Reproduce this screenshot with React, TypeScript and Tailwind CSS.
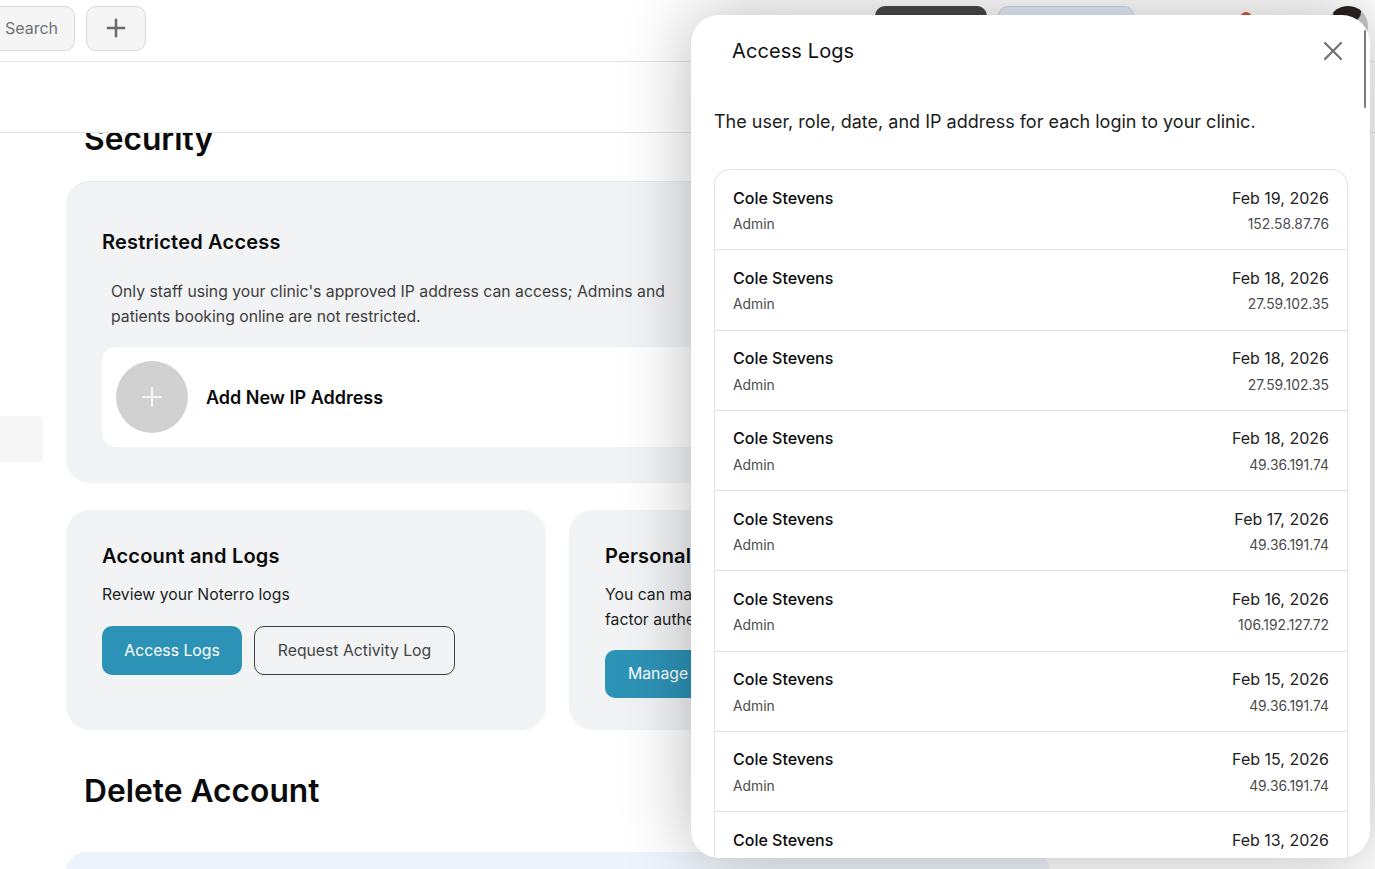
import { Plus, X } from 'lucide-react';

const logs = [
  { date: 'Feb 19, 2026', ip: '152.58.87.76' },
  { date: 'Feb 18, 2026', ip: '27.59.102.35' },
  { date: 'Feb 18, 2026', ip: '27.59.102.35' },
  { date: 'Feb 18, 2026', ip: '49.36.191.74' },
  { date: 'Feb 17, 2026', ip: '49.36.191.74' },
  { date: 'Feb 16, 2026', ip: '106.192.127.72' },
  { date: 'Feb 15, 2026', ip: '49.36.191.74' },
  { date: 'Feb 15, 2026', ip: '49.36.191.74' },
  { date: 'Feb 13, 2026', ip: '49.36.191.74' },
];

function TopBar() {
  return (
    <header className="flex h-[62px] shrink-0 items-start border-b border-[#e5e5e5] pt-[6px]">
      <button className="ml-[-20px] flex h-[45px] w-[95px] items-center justify-end rounded-[10px] border border-[#d8d8d8] bg-[#f5f5f6] pb-[2px] pr-4 text-base text-[#6f7278]">
        Search
      </button>
      <button className="ml-[11px] flex h-[45px] w-[60px] items-center justify-center rounded-[10px] border border-[#d8d8d8] bg-[#f5f5f6] pb-[1px] text-[#6b6b6b]">
        <Plus className="h-7 w-7" strokeWidth={2.2} />
      </button>
      <div className="ml-[729px] h-[45px] w-[112px] rounded-[10px] bg-[#474747]" />
      <div className="ml-[11px] h-[45px] w-[136px] rounded-[10px] border border-[#c5d6ef] bg-[#e6eefa]" />
      <div className="ml-[106px] mt-[6px] h-3 w-3 rounded-full bg-[#d9543c]" />
      <div className="ml-[76px] h-[40px] w-[40px] overflow-hidden rounded-full bg-[#c9c9c9]">
        <div className="ml-[5px] h-[16px] w-[28px] rounded-b-[10px] bg-[#2a211d]" />
      </div>
    </header>
  );
}

function RestrictedCard() {
  return (
    <section className="rounded-[24px] border-t border-[#e9eaec] bg-[#f2f3f5] px-9 pb-9 pt-[47px]">
      <h3 className="text-xl leading-[26px] font-semibold tracking-[0.2px] text-[#0b0b0b]">Restricted Access</h3>
      <p className="mt-[24px] ml-[9px] w-[570px] text-[15.75px] leading-[25px] text-[#3d3d3d]">
        Only staff using your clinic's approved IP address can access; Admins and patients booking online are not
        restricted.
      </p>
      <div className="mt-[18px] flex h-[100px] items-center gap-[18px] rounded-[14px] bg-white px-[14px]">
        <div className="flex h-[72px] w-[72px] items-center justify-center rounded-full bg-[#d1d1d1] text-white">
          <Plus className="h-8 w-8" strokeWidth={1.2} />
        </div>
        <span className="pt-[1px] text-lg font-semibold text-[#0b0b0b]">Add New IP Address</span>
      </div>
    </section>
  );
}

function LogsCard() {
  return (
    <section className="h-[220px] w-[480px] rounded-[24px] bg-[#f2f3f5] px-9 pt-[33px]">
      <h3 className="text-xl leading-[26px] font-semibold tracking-[0.2px] text-[#0b0b0b]">Account and Logs</h3>
      <p className="mt-[13px] text-[15.75px] leading-[25px] text-[#1c1c1c]">Review your Noterro logs</p>
      <div className="mt-[19px] flex gap-3">
        <button className="h-[49px] w-[140px] rounded-[10px] bg-[#2d93b6] text-[15.75px] text-white">Access Logs</button>
        <button className="h-[49px] w-[201px] rounded-[10px] border border-[#3f3f3f] text-[15.75px] text-[#444]">
          Request Activity Log
        </button>
      </div>
    </section>
  );
}

function PersonalCard() {
  return (
    <section className="h-[220px] w-[481px] rounded-[24px] bg-[#f2f3f5] px-9 pt-[33px]">
      <h3 className="text-xl leading-[26px] font-semibold tracking-[0.2px] text-[#0b0b0b]">Personal Security</h3>
      <p className="mt-[13px] text-[15.75px] leading-[25px] text-[#1c1c1c]">
        You can manage your password and two-
        <br />
        factor authentication here
      </p>
      <button className="mt-[18px] h-[48px] rounded-[10px] bg-[#2d93b6] px-[23px] text-[15.75px] text-white">
        Manage Security
      </button>
    </section>
  );
}

function LogRow({ date, ip }: { date: string; ip: string }) {
  return (
    <div className="flex h-[80.25px] shrink-0 justify-between border-b border-[#e2e3e5] px-[18px] pt-[15.7px]">
      <div>
        <div className="text-base leading-6 font-[550] text-[#0b0b0b]">Cole Stevens</div>
        <div className="mt-[4.5px] text-[13.85px] leading-5 text-[#4a4a4a]">Admin</div>
      </div>
      <div className="text-right">
        <div className="text-base leading-6 text-[#222]">{date}</div>
        <div className="mt-[4.5px] text-[13.85px] leading-5 text-[#4a4a4a]">{ip}</div>
      </div>
    </div>
  );
}

function AccessLogsPanel() {
  return (
    <aside className="absolute left-[691px] top-[15px] flex h-[843px] w-[679px] flex-col overflow-hidden rounded-[28px] bg-white shadow-[0_0_70px_rgba(0,0,0,0.28)]">
      <div className="flex h-[72px] shrink-0 items-center justify-between pl-[41px] pr-[21px]">
        <h2 className="text-xl font-normal tracking-[0.1px] text-[#111]">Access Logs</h2>
        <X className="h-8 w-8 text-[#707070]" strokeWidth={1.6} />
      </div>
      <p className="mt-[23px] pl-[23px] text-lg leading-6 text-[#1c1c1c]">
        The user, role, date, and IP address for each login to your clinic.
      </p>
      <div className="ml-[23px] mr-[22px] mt-[35px] flex flex-1 flex-col overflow-hidden rounded-t-[16px] border-x border-t border-[#e2e3e5]">
        {logs.map((row, i) => (
          <LogRow key={i} date={row.date} ip={row.ip} />
        ))}
      </div>
      {/* scrollbar thumb */}
      <div className="absolute right-[4px] top-[15px] h-[78px] w-[2px] rounded-full bg-[#7d7d7d]" />
    </aside>
  );
}

export default function App() {
  return (
    <div className="relative flex h-[869px] w-[1375px] flex-col overflow-hidden bg-white font-['Inter',sans-serif]">
      <TopBar />
      <div className="h-[71px] shrink-0 border-b border-[#e5e5e5] bg-white" />
      <div className="flex min-h-0 flex-1 overflow-hidden">
        <div className="w-[66px] shrink-0 pt-[283px]">
          <div className="h-[46px] w-[43px] rounded-r-[4px] bg-[#f6f6f7]" />
        </div>
        <main className="w-[984px] shrink-0">
          <h1 className="ml-[18px] mt-[-12px] text-[31.75px] leading-[36px] font-semibold text-[#0b0b0b]">Security</h1>
          <div className="mt-[24px]">
            <RestrictedCard />
          </div>
          <div className="mt-[27px] flex gap-[23px]">
            <LogsCard />
            <PersonalCard />
          </div>
          <h2 className="ml-[18px] mt-[41px] text-[31.75px] leading-[40px] font-semibold text-[#0b0b0b]">Delete Account</h2>
          <div className="mt-[41px] h-[60px] rounded-t-[20px] bg-[#eef4fb]" />
        </main>
      </div>
      <AccessLogsPanel />
    </div>
  );
}
